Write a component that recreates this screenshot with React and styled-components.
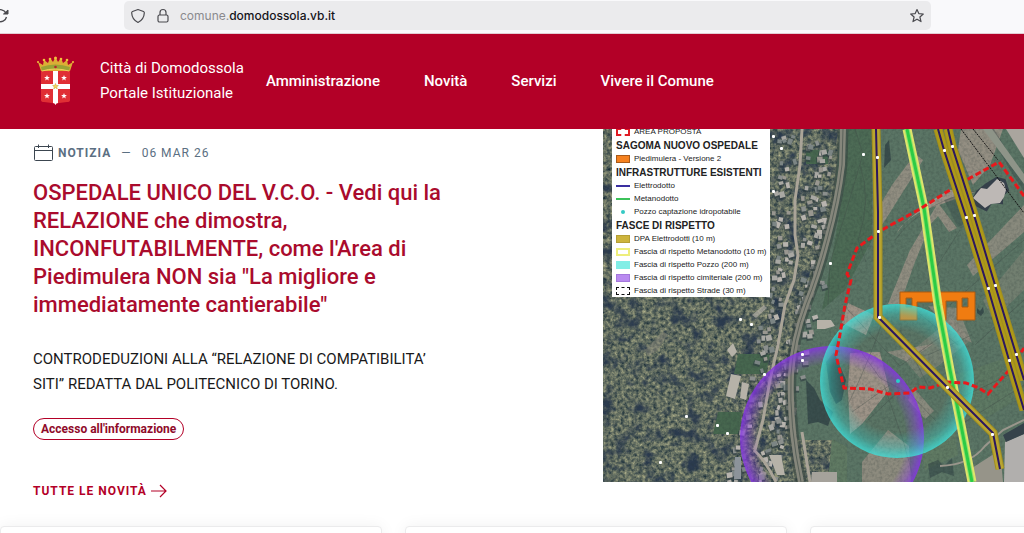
import React from "react";
import styled, { createGlobalStyle } from "styled-components";

const GlobalStyle = createGlobalStyle`
  * { box-sizing: border-box; }
  body {
    margin: 0;
    background: #fff;
    font-family: Roboto, "Open Sans", sans-serif;
  }
  h2, p, ul { margin: 0; padding: 0; }
  a { color: inherit; text-decoration: none; }
`;

const Page = styled.div`
  height: 100vh;
  overflow: hidden;
`;

const BrowserBar = styled.div`
  display: flex;
  align-items: flex-start;
  height: 34px;
  padding: 1px 93px 0 0;
  background: #f9f9fb;
  border-bottom: 1px solid #e3ccd3;
`;

const ReloadButton = styled.button`
  flex: 0 0 124px;
  height: 29px;
  padding: 0;
  border: 0;
  background: none;
  text-align: left;
  svg {
    display: block;
    margin-left: -8px;
  }
`;

const AddressBar = styled.div`
  display: flex;
  flex: 1;
  align-items: center;
  gap: 10px;
  height: 29px;
  padding: 0 6px;
  border-radius: 5px;
  background: #ebebed;
`;

const Url = styled.div`
  flex: 1;
  font-family: Inter, sans-serif;
  font-size: 12px;
  font-weight: 500;
  color: #15141a;
  span {
    font-weight: 400;
    color: #8a8a8e;
  }
`;

const StarButton = styled.button`
  display: flex;
  padding: 0;
  border: 0;
  background: none;
`;

const Header = styled.header`
  display: flex;
  align-items: center;
  height: 95px;
  padding: 0 37px 2px;
  color: #fff;
  background: #b30027;
`;

const Brand = styled.a`
  display: flex;
  align-items: center;
  gap: 26px;
  margin-right: 22px;
  font-size: 15px;
  line-height: 25px;
  white-space: nowrap;
`;

const Nav = styled.nav`
  display: flex;
  gap: 44px;
  font-size: 15px;
  font-weight: 500;
  white-space: nowrap;
`;

const Main = styled.main`
  display: grid;
  grid-template-columns: 603fr 421fr;
`;

const Article = styled.article`
  padding: 14px 0 0 33px;
  color: #b30027;
  white-space: nowrap;
`;

const Category = styled.div`
  display: flex;
  align-items: center;
  gap: 4px;
  height: 20px;
  font-size: 12px;
  letter-spacing: 1px;
  color: #5b6f82;
  strong {
    margin-right: 6px;
    font-weight: 700;
  }
  time {
    margin-left: 6px;
  }
`;

const Title = styled.h2`
  margin-top: 16px;
  font-size: 22px;
  font-weight: 500;
  line-height: 28px;
  color: #aa0b2d;
`;

const Text = styled.p`
  margin: 28px 0 21px;
  font-size: 15px;
  line-height: 25px;
  color: #19191a;
`;

const Chip = styled.a`
  display: inline-flex;
  align-items: center;
  height: 22px;
  padding: 0 7px;
  border: 1px solid #b30027;
  border-radius: 11px;
  font-size: 12px;
  font-weight: 700;
  color: #8f0b2a;
`;

const AllNews = styled.a`
  display: flex;
  align-items: center;
  gap: 4px;
  height: 20px;
  margin-top: 41px;
  font-size: 12px;
  font-weight: 700;
  letter-spacing: 1px;
`;

const MapBox = styled.div`
  position: relative;
  height: 353px;
  overflow: hidden;
  background: #5d6f62;
  > svg {
    display: block;
    width: 100%;
    height: 100%;
  }
`;

const Legend = styled.ul`
  position: absolute;
  top: -4px;
  left: 9px;
  width: 158px;
  padding-left: 4px;
  list-style: none;
  background: #fff;
  color: #222;
  font-family: "Liberation Sans", Arial, sans-serif;
  white-space: nowrap;
`;

const LegendTitle = styled.li`
  padding-top: 1px;
  font-size: 10px;
  font-weight: 700;
  line-height: 13px;
`;

const LegendItem = styled.li`
  display: flex;
  align-items: center;
  gap: 4px;
  font-size: 8px;
  line-height: 13px;
`;

const Swatch = styled.i`
  width: 14px;
  height: ${(p) => p.$h || 8}px;
  background: ${(p) => p.$fill || "transparent"};
  border: ${(p) => p.$border || "0"};
`;

const Dot = styled.i`
  width: 4px;
  height: 4px;
  margin: 0 5px;
  border-radius: 50%;
  background: #35c9c4;
`;

const Cards = styled.section`
  display: flex;
  gap: 23px;
  margin-top: 25px;
`;

const Card = styled.article`
  flex: 0 0 37.3%;
  min-height: 160px;
  border: 1px solid #ebebec;
  border-radius: 4px;
  background: #fff;
  box-shadow: 0 0 16px rgba(0, 0, 0, 0.06);
`;

const legend = [
  { label: "AREA PROPOSTA", border: "2px dashed #e01b24" },
  { title: "SAGOMA NUOVO OSPEDALE" },
  { label: "Piedimulera - Versione 2", fill: "#f5811f", border: "1px solid #a85a1a" },
  { title: "INFRASTRUTTURE ESISTENTI" },
  { label: "Elettrodotto", fill: "#3a2fa0", h: 2 },
  { label: "Metanodotto", fill: "#3cc25a", h: 2 },
  { label: "Pozzo captazione idropotabile", dot: true },
  { title: "FASCE DI RISPETTO" },
  { label: "DPA Elettrodotti (10 m)", fill: "#cdb43c", border: "1px solid #b59f35" },
  { label: "Fascia di rispetto Metanodotto (10 m)", fill: "#fff", border: "2px solid #eeee7c" },
  { label: "Fascia di rispetto Pozzo (200 m)", fill: "#82eee6" },
  { label: "Fascia di rispetto cimiteriale (200 m)", fill: "#b98af0", border: "1px solid #a478dc" },
  { label: "Fascia di rispetto Strade (30 m)", border: "1px dashed #111" },
];

// small seeded generator, so houses stay in place between renders
function makeRandom(seed) {
  let s = seed;
  return () => {
    s = (s * 16807) % 2147483647;
    return s / 2147483647;
  };
}

const roadPoints = [
  [802, 129], [800, 165], [795, 200], [795, 235], [798, 255], [794, 280],
  [785, 305], [778, 345], [770, 380], [763, 420], [755, 450],
];

function makeHouses() {
  const rnd = makeRandom(77);
  const list = [];
  const colors = ["#a9a8a3", "#8b8f8d", "#b8b4ae", "#7c8584", "#999790"];
  for (let y = 134; y < 480; y += 5) {
    const i = Math.max(0, roadPoints.findIndex((p) => p[1] > y) - 1);
    const [ax, ay] = roadPoints[y > 450 ? 9 : i];
    const [bx, by] = roadPoints[y > 450 ? 10 : i + 1];
    const x = ax + ((bx - ax) * (y - ay)) / (by - ay);
    for (let n = 0; n < 3; n++) {
      const off = rnd() > 0.35 ? 5 + rnd() * 24 : -8 - rnd() * 16;
      list.push({
        x: x + off,
        y: y + rnd() * 4,
        w: 3 + rnd() * 3,
        h: 3 + rnd() * 3,
        r: rnd() * 40 - 20,
        c: colors[Math.floor(rnd() * colors.length)],
      });
    }
  }
  return list;
}

const houses = makeHouses();
const road = roadPoints.map((p) => p.join(",")).join(" ");
const rail = "M843 129 L842 165 Q838 200 827 240 Q818 275 806 305 Q793 340 791 375 Q789 425 801 482";
const powerA = "M876 129 L878 212 L878 317 L947 387 L993 433 L1000 469";
const powerB = "M938 129 L944 150 L966 217 L988 288 L1009 360 L1024 410";
const powerC = "M948 129 L952 146 L974 215 L995 285 L1016 354 L1024 380";
const gas = "M907 129 L924 208 L938 305 L950 370 L960 420 L972 482";
const area =
  "M1024 196 L999 162 L970 178 L945 193 L920 209 L880 231 L857 248 L847 274 L851 280 L845 305 L839 340 L836 355 L844 388 L870 389 L888 394 L910 393 L918 387 L930 388 L947 382 L966 383 L979 388 L988 394 L1010 369 L1024 348";

const nodes = [
  [877, 157], [878, 231], [863, 154], [830, 263], [944, 150], [952, 146],
  [966, 217], [974, 215], [988, 288], [995, 285], [879, 317], [947, 387],
  [992, 434], [1009, 360], [1016, 354], [802, 354], [764, 374], [740, 319],
  [751, 324], [686, 416], [660, 462], [717, 425], [727, 433], [773, 136],
  [781, 148], [773, 191], [802, 360],
];

function TerritoryMap() {
  return (
    <svg viewBox="603 129 421 353" preserveAspectRatio="xMinYMin slice" aria-hidden="true">
      <defs>
        <filter id="trees" x="0" y="0" width="100%" height="100%" colorInterpolationFilters="sRGB">
          <feTurbulence type="fractalNoise" baseFrequency="0.28" numOctaves="3" seed="8" />
          <feColorMatrix values="0.75 0 0 0 0.03  0.65 0 0 0 0.12  0.4 0 0 0 0.19  0 0 0 0 1" />
          <feComposite in2="SourceGraphic" operator="in" />
        </filter>
        <filter id="shade" x="0" y="0" width="100%" height="100%" colorInterpolationFilters="sRGB">
          <feTurbulence type="fractalNoise" baseFrequency="0.07" numOctaves="5" seed="21" />
          <feColorMatrix values="0 0 0 0 0.17  0 0 0 0 0.23  0 0 0 0 0.31  3.4 0 0 0 -1.7" />
          <feComposite in2="SourceGraphic" operator="in" />
        </filter>
        <filter id="grain" x="0" y="0" width="100%" height="100%" colorInterpolationFilters="sRGB">
          <feTurbulence type="fractalNoise" baseFrequency="0.35" numOctaves="2" seed="4" />
          <feColorMatrix values="0 0 0 0 0.15  0 0 0 0 0.2  0 0 0 0 0.2  1.6 0 0 0 -0.62" />
        </filter>
        <radialGradient id="well">
          <stop offset="0.66" stopColor="#35d6cf" stopOpacity="0" />
          <stop offset="0.86" stopColor="#35d6cf" stopOpacity="0.35" />
          <stop offset="1" stopColor="#3fe0da" stopOpacity="0.8" />
        </radialGradient>
        <radialGradient id="cemetery">
          <stop offset="0.8" stopColor="#8a3fe0" stopOpacity="0" />
          <stop offset="0.91" stopColor="#8a3fe0" stopOpacity="0.4" />
          <stop offset="1" stopColor="#8436e0" stopOpacity="0.88" />
        </radialGradient>
      </defs>

      {/* woods on the left, fields on the right */}
      <rect x="603" y="129" width="421" height="353" fill="#5b7565" />
      <path d="M603 129 H840 L834 200 L812 280 L795 340 L790 400 L798 440 L835 440 V482 H603Z" filter="url(#trees)" />
      <path d="M603 129 H838 L830 200 L808 280 L792 340 L788 400 L796 440 L832 450 V482 H603Z" filter="url(#shade)" />

      <g fill="#47674f">
        <path d="M806 150 h22 v14 h-22z" />
        <path d="M738 354 h32 l-4 20 h-32z" />
        <path d="M718 412 h24 l-3 22 h-26z" />
        <path d="M848 129 H872 V240 L845 290 L822 310 L835 240 L845 180Z" opacity="0.7" />
      </g>
      <path d="M645 350 L663 332 L668 334 L658 350 L648 356Z" fill="#85857a" opacity="0.6" />
      <g fill="#9d9387">
        <path d="M892 185 L915 154 L923 160 L884 222 L874 235 L880 205Z" opacity="0.8" />
        <path d="M934 199 L950 190 L975 192 L925 210 Q903 220 897 233 L905 222Z" />
        <path d="M938 203 L957 228 L949 232 L938 216 L930 225 L915 262 L900 304 L888 304 L910 250 Z" opacity="0.8" />
        <path d="M961 129 H1003 L990 165 L973 185 L958 150Z" opacity="0.85" />
        <path d="M903 358 L952 318 L971 340 L938 366 L920 378Z" opacity="0.4" />
        <path d="M848 303 L874 315 L866 335 L842 323Z" />
        <path d="M850 353 L880 352 L889 390 L862 424 L850 434 L848 390Z" />
        <path d="M887 352 L933 344 L907 362Z" opacity="0.7" />
        <path d="M913 387 L934 411 L925 419 L908 400Z" opacity="0.7" />
        <path d="M862 462 L888 430 L909 446 L911 482 H862Z" opacity="0.75" />
        <path d="M1024 205 L967 265 L973 276 L1024 232Z" opacity="0.7" />
        <path d="M1024 250 L983 300 L993 320 L1024 290Z" opacity="0.35" />
        <path d="M958 308 L972 343 L950 330 L928 306Z" opacity="0.6" />
      </g>
      <g fill="#607a63">
        <path d="M955 375 L1024 352 V395 L975 425Z" opacity="0.7" />
        <path d="M832 439 L847 447 V482 H828Z" />
        <path d="M920 440 L955 430 L958 455 L925 470Z" />
      </g>
      <g fill="#2c3d42" opacity="0.7">
        <path d="M826 362 L834 352 L840 366 L846 380 L842 400 L836 404 L830 392Z" />
        <path d="M806 380 L814 388 L820 400 L833 412 L828 426 L818 422 L808 424Z" />
        <path d="M928 464 L938 460 L944 466 L952 458 L954 476 L942 472 L930 478Z" opacity="0.7" />
        <path d="M885 145 l4 -5 l2 20 l-7 8z" />
        <path d="M829 345 l8 -12 l3 20z" />
        <path d="M944 200 l20 -6 l10 25 l-16 8z" opacity="0.45" />
        <path d="M977 308 l3 3 l3 -4 l1 5 l-3 4 l-4 -3z" />
        <path d="M987 129 h7 l30 50 v12 l-10 -14z" opacity="0.5" />
      </g>
      <rect x="603" y="129" width="421" height="353" filter="url(#grain)" opacity="0.3" />

      <g fill="none" stroke="#404a46" strokeWidth="0.6" opacity="0.6">
        <path d="M855 129 L863 154 L845 215 L830 263 L828 305" />
        <path d="M860 165 Q872 200 858 240 L866 262" />
        <path d="M846 408 Q858 385 872 350 L884 318" />
        <path d="M884 385 L896 420 L903 440 L914 480" />
        <path d="M860 350 L880 378 L910 394 L936 421 M852 412 L890 385 M868 420 L899 391" />
        <path d="M848 310 L900 366 L950 330 M900 330 L930 390 M915 310 L958 345" />
        <path d="M895 240 Q925 200 980 190 M925 285 L960 230 M950 305 L1024 240 M975 345 L1024 300" />
        <path d="M928 355 L972 335 M960 425 L1024 385 M945 405 L1015 372" />
      </g>

      {/* town */}
      {houses.map((h, i) => (
        <g key={i} transform={`rotate(${h.r} ${h.x} ${h.y})`}>
          <rect x={h.x - 1} y={h.y + 1} width={h.w + 1} height={h.h + 1} fill="#303d42" opacity="0.65" />
          <rect x={h.x} y={h.y} width={h.w} height={h.h} fill={h.c} />
        </g>
      ))}
      <g fill="#b6b2a8">
        <path d="M731 374 l10 2 l-6 23 l-9 -3z" />
        <path d="M742 382 l7 2 l-3 16 l-6 -2z" />
        <path d="M727 350 l6 -7 l4 9 l-5 5z" />
        <path d="M752 315 l12 -10 l3 3 l-11 10z" opacity="0.7" />
        <path d="M735 457 l6 0 v22 h-7z" fill="#8c939a" />
        <path d="M769 455 h12 l4 20 h-8z" />
        <path d="M817 320 l14 0 l4 6 l-10 3 h-8z" />
        <path d="M812 472 h25 v10 h-26z" fill="#a5a29b" />
      </g>
      <polyline points={road} fill="none" stroke="#aaa498" strokeWidth="3" />
      <path d="M754 450 Q765 460 776 482" fill="none" stroke="#aaa498" strokeWidth="3" />
      <path d={rail} fill="none" stroke="#35423f" strokeWidth="11" opacity="0.6" />
      <path d={rail} fill="none" stroke="#85867b" strokeWidth="6" />
      <path d={rail} fill="none" stroke="#59615a" strokeWidth="1" />
      <path d="M802 432 L810 482" stroke="#aaa498" strokeWidth="3" />

      <path d="M973 201 L978 192 L987 185 L997 179 L1004 181 L1007 190 L1001 195 L1001 202 L991 201 L986 209 L978 205Z" fill="#35404a" stroke="#35404a" strokeWidth="4" />
      <path d="M973 198 L981 188 L987 189 L997 179 L1004 183 L1006 190 L1004 197 L1000 203 L991 204 L985 208Z" fill="#bdb8b5" />
      <path d="M983 129 H992 L1024 174 V184 Z" fill="#8e9488" />
      <path d="M1006 129 H1024 V158Z" fill="#aaa59e" />
      <path d="M1005 442 L1024 434 V482 H1004Z" fill="#b1afad" />
      <path d="M1003 435 L1024 423 V434 L1006 442Z" fill="#35424a" />
      <path d="M940 466 Q970 465 985 446 L1003 430 L1024 420" fill="none" stroke="#9a968c" strokeWidth="2" />
      <path d="M972 468 L1000 450 L1003 482 H975Z" fill="#969489" />

      <g fill="none" stroke="#151515" strokeWidth="1" strokeDasharray="2 1">
        <path d="M961 129 L1024 213" />
        <path d="M973 129 L998 160" />
      </g>

      {/* protection bands */}
      <circle cx="832" cy="438" r="92" fill="url(#cemetery)" />
      <path
        d="M900 292 H975 V320 H957 V301 H946 V320 H936 V302 H917 V320 H900Z M906 298 V307 H912 V298Z M962 298 V307 H968 V298Z"
        fill="#f07c11"
        fillRule="evenodd"
        stroke="#aa5a12"
        strokeWidth="1"
      />
      <circle cx="897" cy="381" r="77" fill="url(#well)" />
      <path d={gas} fill="none" stroke="#dfe56b" strokeWidth="9" />
      <path d={gas} fill="none" stroke="#8be36d" strokeWidth="5" />
      <path d={gas} fill="none" stroke="#2ccb45" strokeWidth="3" />
      <path d={area} fill="none" stroke="#e8191c" strokeWidth="3" strokeDasharray="6 3" />
      <g fill="none" stroke="#a08e20" strokeWidth="9">
        <path d={powerA} />
        <path d={powerB} />
        <path d={powerC} />
      </g>
      <g fill="none" stroke="#b9a530" strokeWidth="7">
        <path d={powerA} />
        <path d={powerB} stroke="#ae9918" />
        <path d={powerC} stroke="#ae9918" />
      </g>
      <g fill="none" stroke="#2b1760" strokeWidth="2">
        <path d={powerA} />
        <path d={powerB} />
        <path d={powerC} />
      </g>
      <circle cx="898" cy="381" r="2" fill="#27cfc8" />
      {nodes.map(([x, y]) => (
        <rect key={`${x}-${y}`} x={x - 1} y={y - 1} width="3" height="3" rx="1" fill="#fff" />
      ))}
    </svg>
  );
}

const STAR = "M0 -3 L0.8 -1 L2.9 -1 L1.2 0.4 L1.8 2.5 L0 1.2 L-1.8 2.5 L-1.2 0.4 L-2.9 -1 L-0.8 -1Z";

function Crest() {
  return (
    <svg width="37" height="50" viewBox="0 0 37 50" aria-hidden="true">
      <path d="M4 15 H33 V44 Q33 46 30 46 L22 47 Q19 47 18.500 49 Q18 47 15 47 L7 46 Q4 46 4 44Z" fill="#e02f35" />
      <path d="M16 15 H21 V47 Q19 47 18.500 49 Q18 47 16 47Z" fill="#fff" />
      <path d="M4 28 H33 V33 H4Z" fill="#fff" />
      <path d="M4 15 L1 6 L6 9 L7 4 L11 7 L13 2 L16 6 L18.500 1 L21 6 L24 2 L26 7 L30 4 L31 9 L36 6 L33 15Z" fill="#dcae35" />
      <path d="M4 11 Q18 6 33 11 L32 15 Q18 11 5 15Z" fill="#9aa335" />
      <path d="M5 15 Q18 11 32 15" fill="none" stroke="#f2d15c" />
      <g fill="#f0c23c">
        <circle cx="1" cy="6" r="1" />
        <circle cx="7" cy="4" r="1.300" />
        <circle cx="13" cy="3" r="1.300" />
        <circle cx="18.500" cy="2" r="1.500" />
        <circle cx="24" cy="3" r="1.300" />
        <circle cx="30" cy="4" r="1.300" />
        <circle cx="36" cy="6" r="1" />
      </g>
      <circle cx="18.500" cy="11" r="1.300" fill="#b3262b" />
      <g fill="#fff">
        <path d={STAR} transform="translate(10 22)" />
        <path d={STAR} transform="translate(27 22)" />
        <path d={STAR} transform="translate(10 40)" />
        <path d={STAR} transform="translate(27 40)" />
      </g>
      <path d={STAR} transform="translate(18.500 30.500)" fill="#f6d85a" stroke="#c9a23a" strokeWidth="0.500" />
    </svg>
  );
}

function ReloadIcon() {
  return (
    <svg width="17" height="29" viewBox="0 0 17 29" fill="none" stroke="#4a4a4f" strokeWidth="1.300">
      <path d="M14 12 A6 6 0 1 0 14.500 16" />
      <path d="M16 9 V13 H11.500Z" fill="#4a4a4f" strokeWidth="1" />
    </svg>
  );
}

function ShieldIcon() {
  return (
    <svg width="16" height="16" viewBox="0 0 16 16" fill="none" stroke="#4a4a4f" strokeWidth="1.200">
      <path d="M8 1.500 L13.500 3.500 Q14.500 4 14.300 5 Q14 11.500 8 14.500 Q2 11.500 1.700 5 Q1.500 4 2.500 3.500Z" strokeLinejoin="round" />
    </svg>
  );
}

function LockIcon() {
  return (
    <svg width="14" height="16" viewBox="0 0 14 16" fill="none" stroke="#4a4a4f" strokeWidth="1.200">
      <rect x="2" y="7" width="10" height="7" rx="1.500" />
      <path d="M4 7 V4.500 A3 3 0 0 1 10 4.500 V7" />
    </svg>
  );
}

function StarIcon() {
  return (
    <svg width="16" height="16" viewBox="0 0 16 16" fill="none" stroke="#4a4a4f" strokeWidth="1.200" strokeLinejoin="round">
      <path d="M8 1.500 L9.800 5.600 L14.300 6 L10.900 9 L12 13.600 L8 11.200 L4 13.600 L5.100 9 L1.700 6 L6.200 5.600Z" />
    </svg>
  );
}

function CalendarIcon() {
  return (
    <svg width="21" height="18" viewBox="0 0 21 18" fill="none" stroke="#3c4650">
      <rect x="1.500" y="2.500" width="18" height="14" rx="1" />
      <path d="M1.500 6.500 H19.500 M5.500 0.500 V4 M15.500 0.500 V4" />
    </svg>
  );
}

function ArrowIcon() {
  return (
    <svg width="16" height="14" viewBox="0 0 16 14" fill="none" stroke="#b30027" strokeWidth="1.200">
      <path d="M0 7 H15 M9 1 L15 7 L9 13" />
    </svg>
  );
}

export default function App() {
  return (
    <Page>
      <GlobalStyle />
      <BrowserBar>
        <ReloadButton aria-label="Ricarica">
          <ReloadIcon />
        </ReloadButton>
        <AddressBar>
          <ShieldIcon />
          <LockIcon />
          <Url>
            <span>comune.</span>domodossola.vb.it
          </Url>
          <StarButton aria-label="Segnalibro">
            <StarIcon />
          </StarButton>
        </AddressBar>
      </BrowserBar>

      <Header>
        <Brand href="#home">
          <Crest />
          <span>
            Città di Domodossola
            <br />
            Portale Istituzionale
          </span>
        </Brand>
        <Nav>
          <a href="#amministrazione">Amministrazione</a>
          <a href="#novita">Novità</a>
          <a href="#servizi">Servizi</a>
          <a href="#vivere">Vivere il Comune</a>
        </Nav>
      </Header>

      <Main>
        <Article>
          <Category>
            <CalendarIcon />
            <strong>NOTIZIA</strong>
            <span>—</span>
            <time dateTime="2026-03-06">06 MAR 26</time>
          </Category>
          <Title>
            OSPEDALE UNICO DEL V.C.O. - Vedi qui la
            <br />
            RELAZIONE che dimostra,
            <br />
            INCONFUTABILMENTE, come l'Area di
            <br />
            Piedimulera NON sia "La migliore e
            <br />
            immediatamente cantierabile"
          </Title>
          <Text>
            CONTRODEDUZIONI ALLA “RELAZIONE DI COMPATIBILITA’
            <br />
            SITI” REDATTA DAL POLITECNICO DI TORINO.
          </Text>
          <Chip href="#accesso">Accesso all'informazione</Chip>
          <AllNews href="#tutte">
            TUTTE LE NOVITÀ
            <ArrowIcon />
          </AllNews>
        </Article>
        <MapBox>
          <TerritoryMap />
          <Legend>
            {legend.map((row) =>
              row.title ? (
                <LegendTitle key={row.title}>{row.title}</LegendTitle>
              ) : (
                <LegendItem key={row.label}>
                  {row.dot ? <Dot /> : <Swatch $fill={row.fill} $border={row.border} $h={row.h} />}
                  {row.label}
                </LegendItem>
              )
            )}
          </Legend>
        </MapBox>
      </Main>

      <Cards>
        <Card />
        <Card />
        <Card />
      </Cards>
    </Page>
  );
}
